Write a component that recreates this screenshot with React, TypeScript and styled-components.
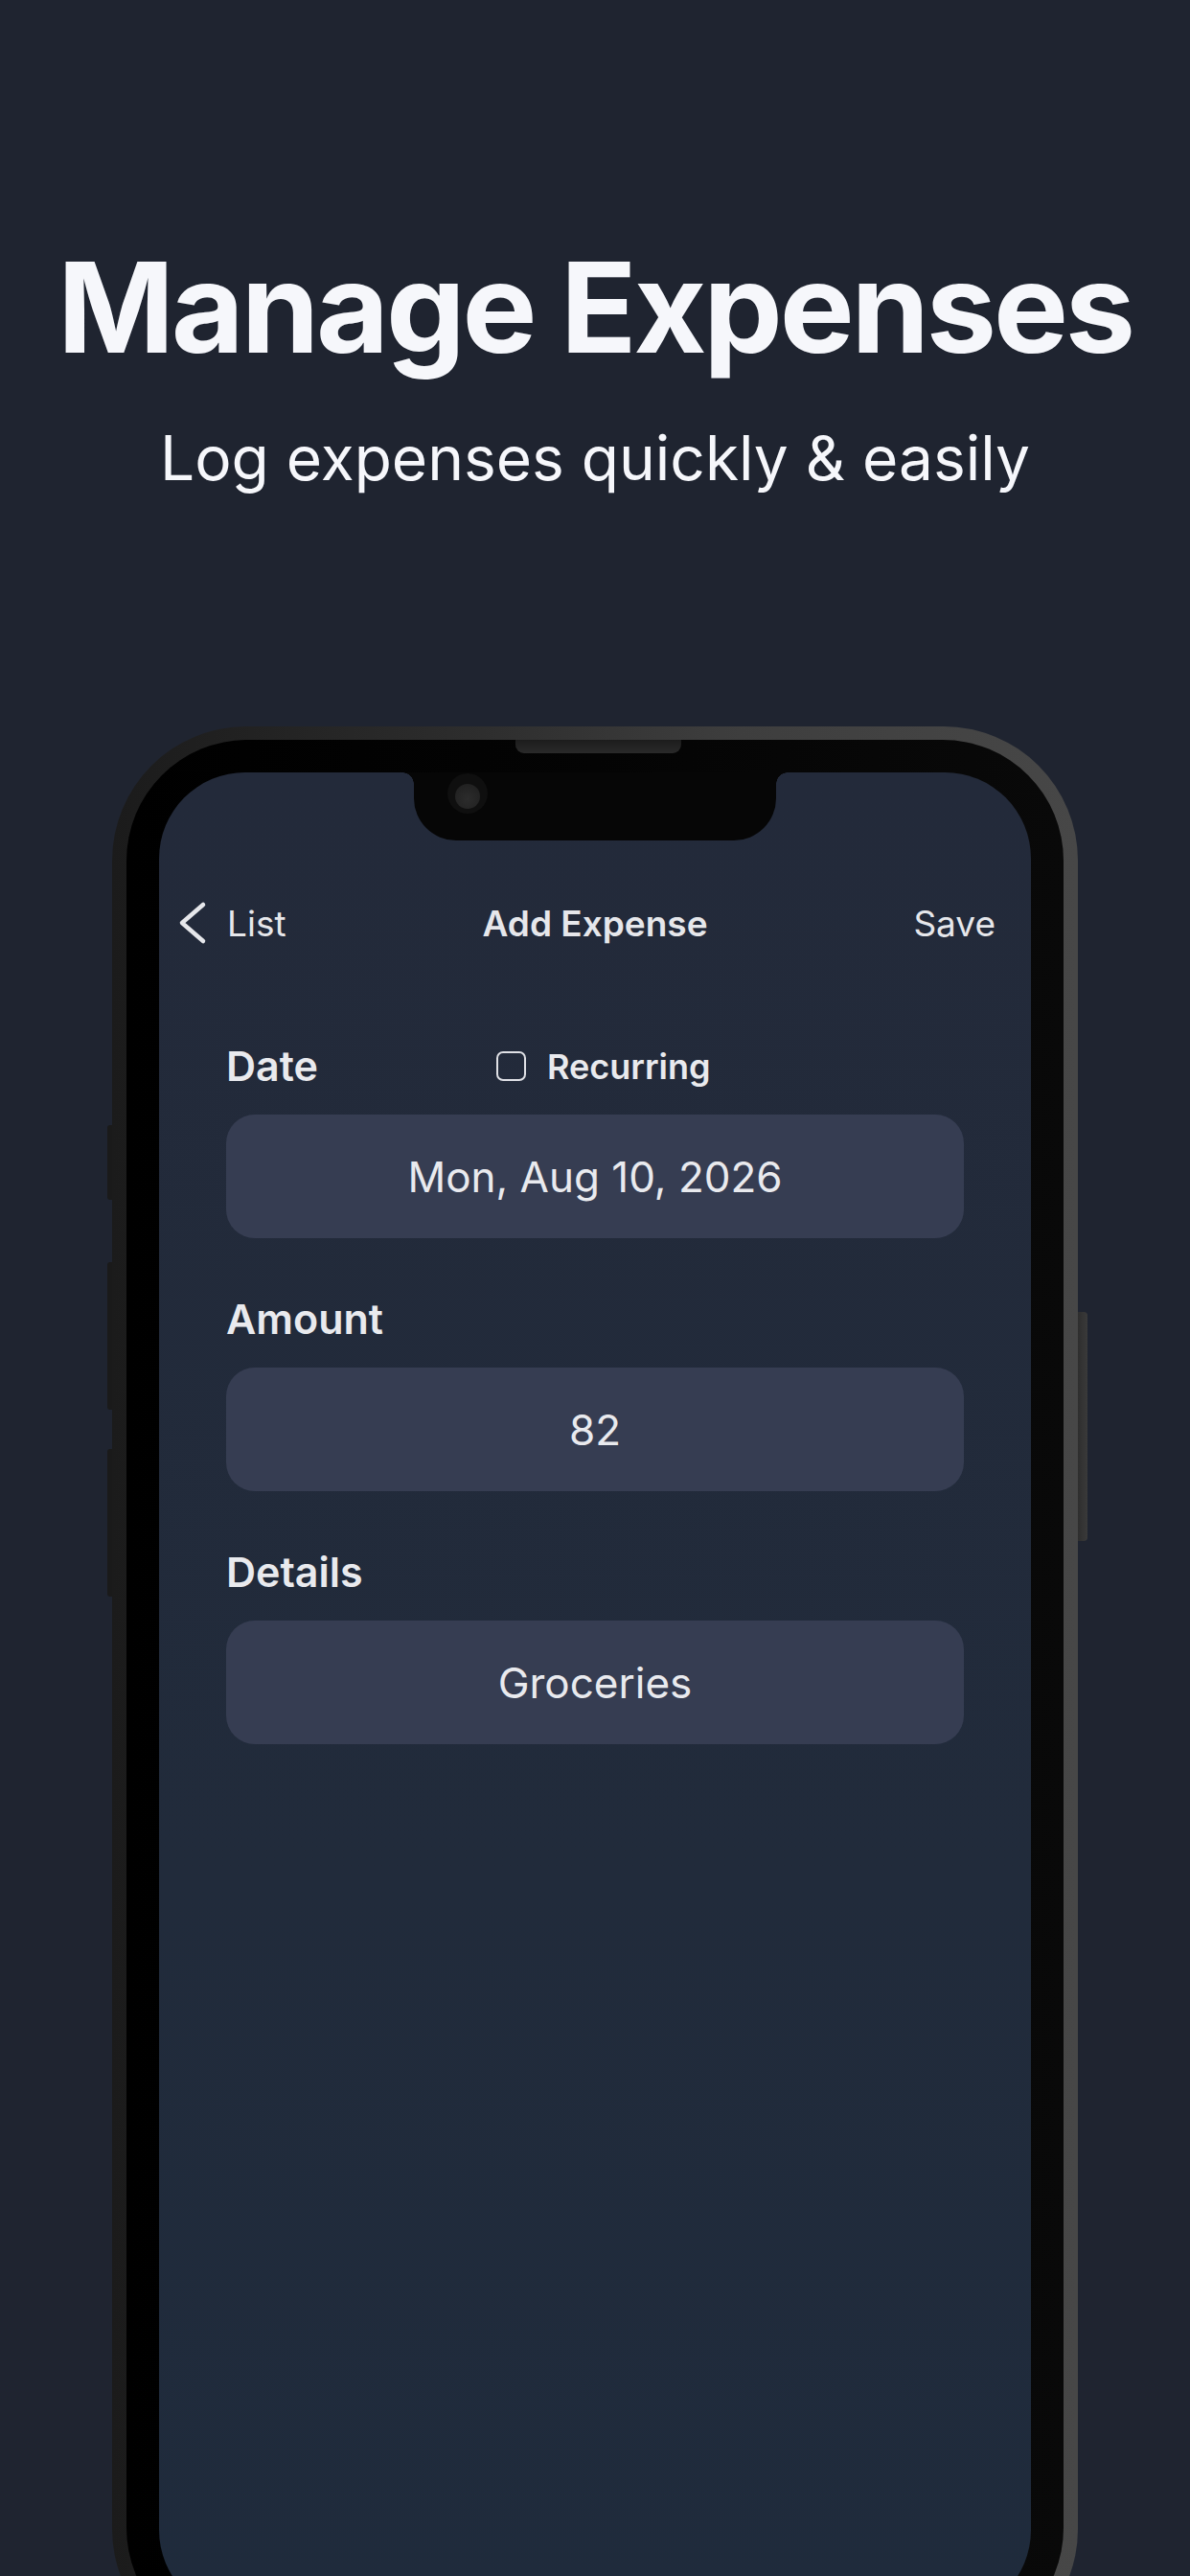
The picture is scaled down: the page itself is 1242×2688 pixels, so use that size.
import React from "react";
import styled, { createGlobalStyle } from "styled-components";

const GlobalStyle = createGlobalStyle`
  html, body {
    margin: 0;
    padding: 0;
    background: #1f2430;
  }
  * { box-sizing: border-box; }
`;

const Page = styled.div`
  width: 1242px;
  height: 2688px;
  overflow: hidden;
  background: #1f2430;
  display: flex;
  flex-direction: column;
  align-items: center;
  font-family: Inter, "Noto Sans", sans-serif;
`;

const Title = styled.h1`
  margin: 255px 0 0;
  font-size: 131px;
  line-height: 1;
  font-weight: 700;
  letter-spacing: -3.2px;
  color: #f6f7fb;
  white-space: nowrap;
`;

const Subtitle = styled.p`
  margin: 60px 0 0;
  font-size: 64px;
  line-height: 1;
  font-weight: 400;
  color: #f6f7fb;
  white-space: nowrap;
`;

const PhoneFrame = styled.div`
  position: relative;
  flex-shrink: 0;
  margin-top: 248px;
  width: 1008px;
  height: 2021px;
  padding: 14px 15px 15px;
  border-radius: 140px;
  background: linear-gradient(90deg, #1b1b1b 0%, #2c2c2c 35%, #3e3e3e 65%, #474747 100%);
`;

const SideButton = styled.div<{ $side: "left" | "right"; $top: number; $height: number }>`
  position: absolute;
  top: ${(p) => p.$top}px;
  height: ${(p) => p.$height}px;
  ${(p) => (p.$side === "left" ? "left: -5px; width: 5px;" : "right: -10px; width: 10px;")}
  border-radius: ${(p) => (p.$side === "left" ? "3px 0 0 3px" : "0 4px 4px 0")};
  background: ${(p) => (p.$side === "left" ? "#1a1a1a" : "linear-gradient(90deg, #2e2e2e, #3a3a3a)")};
`;

const Bezel = styled.div`
  position: relative;
  width: 100%;
  height: 100%;
  padding: 34px;
  border-radius: 126px;
  background: linear-gradient(90deg, #000 0%, #040404 50%, #090909 100%);
`;

const Speaker = styled.div`
  position: absolute;
  top: 0;
  left: 50%;
  transform: translateX(-48%);
  width: 173px;
  height: 14px;
  border-radius: 0 0 9px 9px;
  background: linear-gradient(180deg, #1c1c1c, #2a2a2a);
`;

const Screen = styled.div`
  position: relative;
  width: 100%;
  height: 100%;
  border-radius: 90px;
  padding-top: 134px;
  background: linear-gradient(180deg, #232a3a 0%, #212b3b 60%, #1f2b3c 100%);
`;

const Notch = styled.div`
  position: absolute;
  top: 0;
  left: 50%;
  transform: translateX(-50%);
  width: 378px;
  height: 71px;
  background: #060606;
  border-radius: 0 0 44px 44px;

  &::before,
  &::after {
    content: "";
    position: absolute;
    top: 0;
    width: 12px;
    height: 12px;
  }
  &::before {
    left: -12px;
    background: radial-gradient(circle at 0 100%, transparent 11.5px, #060606 12px);
  }
  &::after {
    right: -12px;
    background: radial-gradient(circle at 100% 100%, transparent 11.5px, #060606 12px);
  }
`;

const Camera = styled.div`
  position: absolute;
  top: 1px;
  left: 35px;
  width: 42px;
  height: 42px;
  border-radius: 50%;
  background: #0f0f0f;
  display: flex;
  align-items: center;
  justify-content: center;

  &::after {
    content: "";
    width: 26px;
    height: 26px;
    margin-top: 6px;
    border-radius: 50%;
    background: radial-gradient(circle at 50% 60%, #2c2c2c 0%, #1e1e1e 100%);
  }
`;

const NavBar = styled.div`
  display: grid;
  grid-template-columns: 1fr auto 1fr;
  align-items: center;
  height: 37px;
  padding: 0 20px;
  color: #e6e7eb;
  font-size: 37px;
  line-height: 1;
`;

const BackButton = styled.div`
  display: flex;
  align-items: center;
  gap: 21px;
  font-weight: 400;
`;

const NavTitle = styled.div`
  font-weight: 600;
  white-space: nowrap;
`;

const NavAction = styled.div`
  justify-self: end;
  margin-right: 17px;
  font-weight: 400;
`;

const Form = styled.div`
  display: flex;
  flex-direction: column;
  gap: 63px;
  padding: 0 70px;
  margin-top: 114px;
`;

const Group = styled.div`
  display: flex;
  flex-direction: column;
  gap: 29px;
`;

const LabelRow = styled.div`
  display: flex;
  align-items: center;
  height: 43px;
`;

const Label = styled.div<{ $width?: number }>`
  font-size: 43px;
  line-height: 1;
  font-weight: 600;
  color: #e9eaee;
  ${(p) => (p.$width ? `width: ${p.$width}px;` : "")}
`;

const Toggle = styled.div`
  display: flex;
  align-items: center;
  gap: 22px;
`;

const CheckBox = styled.div`
  width: 31px;
  height: 31px;
  border: 2.5px solid #dfe0e5;
  border-radius: 7px;
`;

const ToggleText = styled.div`
  font-size: 36px;
  line-height: 1;
  font-weight: 600;
  color: #e9eaee;
`;

const Field = styled.div`
  height: 129px;
  border-radius: 30px;
  background: #363d52;
  display: flex;
  align-items: center;
  justify-content: center;
  font-size: 44px;
  line-height: 1;
  font-weight: 400;
  color: #e9eaee;
`;

const Chevron = () => (
  <svg width="30" height="46" viewBox="0 0 30 46" fill="none">
    <path
      d="M26 4 L4 23 L26 42"
      stroke="#e6e7eb"
      strokeWidth="4.5"
      strokeLinecap="round"
      strokeLinejoin="round"
    />
  </svg>
);

export default function App() {
  return (
    <>
      <GlobalStyle />
      <Page>
        <Title>Manage Expenses</Title>
        <Subtitle>Log expenses quickly &amp; easily</Subtitle>
        <PhoneFrame>
          <SideButton $side="left" $top={416} $height={78} />
          <SideButton $side="left" $top={559} $height={154} />
          <SideButton $side="left" $top={754} $height={154} />
          <SideButton $side="right" $top={611} $height={239} />
          <Bezel>
            <Speaker />
            <Screen>
              <Notch>
                <Camera />
              </Notch>
              <NavBar>
                <BackButton>
                  <Chevron />
                  <span>List</span>
                </BackButton>
                <NavTitle>Add Expense</NavTitle>
                <NavAction>Save</NavAction>
              </NavBar>
              <Form>
                <Group>
                  <LabelRow>
                    <Label $width={282}>Date</Label>
                    <Toggle>
                      <CheckBox />
                      <ToggleText>Recurring</ToggleText>
                    </Toggle>
                  </LabelRow>
                  <Field>Mon, Aug 10, 2026</Field>
                </Group>
                <Group>
                  <LabelRow>
                    <Label>Amount</Label>
                  </LabelRow>
                  <Field>82</Field>
                </Group>
                <Group>
                  <LabelRow>
                    <Label>Details</Label>
                  </LabelRow>
                  <Field>Groceries</Field>
                </Group>
              </Form>
            </Screen>
          </Bezel>
        </PhoneFrame>
      </Page>
    </>
  );
}
